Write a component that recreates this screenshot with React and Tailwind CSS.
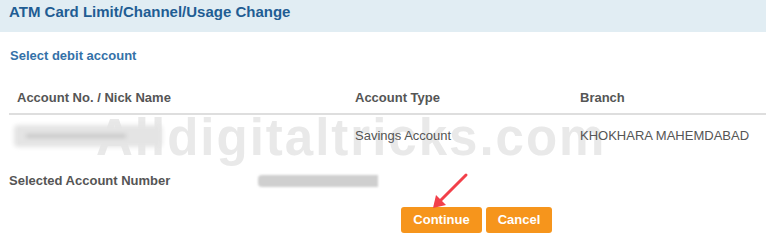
import React from 'react'

const App = () => {
    return (
        <div className="relative w-[766px] h-[241px] bg-white overflow-hidden font-['Liberation_Sans',Arial,sans-serif]">
            {/* Title bar */}
            <div className="h-[32px] bg-[#e1edf3] pl-[9px] pt-[3px]">
                <h1 className="text-[15px] font-bold text-[#1f5d93] leading-[18px]">ATM Card Limit/Channel/Usage Change</h1>
            </div>

            <div className="pl-[9px]">
                <p className="mt-[16px] text-[13px] font-bold text-[#3471a8] leading-[16px] pl-px">Select debit account</p>

                {/* Account table */}
                <div className="mt-[18px]">
                    <div className="grid grid-cols-[338px_225px_1fr] h-[33px] items-center border-b-2 border-[#dedede] text-[13px] font-bold text-[#555] pl-[8px]">
                        <span>Account No. / Nick Name</span>
                        <span>Account Type</span>
                        <span>Branch</span>
                    </div>
                    <div className="grid grid-cols-[338px_225px_1fr] h-[42px] items-center text-[13px] text-[#555] pl-[8px]">
                        <div className="-ml-[3px] w-[148px] h-[22px] bg-[#e4e4e4] blur-[2px] rounded-sm relative z-10">
                            <div className="absolute left-[12px] top-[9px] w-[100px] h-[4px] bg-[#c8c8c8]" />
                        </div>
                        <span className="relative z-10">Savings Account</span>
                        <span className="relative z-10">KHOKHARA MAHEMDABAD</span>
                    </div>
                </div>

                <div className="flex items-center h-[28px] mt-[10px]">
                    <span className="w-[249px] text-[13px] font-bold text-[#555]">Selected Account Number</span>
                    <div className="w-[120px] h-[12px] bg-[#cfcfcf] blur-[1px] rounded-l-sm" />
                </div>

                <div className="flex gap-[4px] ml-[392px] mt-[12px]">
                    <button className="w-[81px] h-[26px] rounded-[3px] bg-[#f6951c] text-white text-[13px] font-bold">Continue</button>
                    <button className="w-[66px] h-[26px] rounded-[3px] bg-[#f6951c] text-white text-[13px] font-bold">Cancel</button>
                </div>
            </div>

            {/* Watermark */}
            <div className="absolute left-[96px] top-[112px] text-[51px] leading-none font-bold text-[#e9e9e9] tracking-[2px] pointer-events-none select-none">
                Alldigitaltricks.com
            </div>

            {/* Red arrow */}
            <svg className="absolute left-0 top-0 pointer-events-none" width="766" height="241">
                <line x1="466" y1="175" x2="440" y2="201" stroke="#f2404a" strokeWidth="3" strokeLinecap="round" />
                <polygon points="433,208 436,195 446,205" fill="#f2404a" />
            </svg>
        </div>
    )
}

export default App
